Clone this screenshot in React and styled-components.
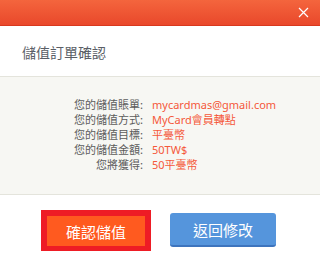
import React from "react";
import styled, { createGlobalStyle } from "styled-components";

const GlobalStyle = createGlobalStyle`
  html, body {
    margin: 0;
    padding: 0;
    background: #ffffff;
  }
  body {
    font-family: "Noto Sans", "Noto Sans CJK TC", sans-serif;
  }
`;

const Dialog = styled.div`
  width: 320px;
  height: 267px;
  display: flex;
  flex-direction: column;
  background: #ffffff;
  overflow: hidden;
`;

const Header = styled.div`
  height: 25px;
  display: flex;
  align-items: center;
  justify-content: flex-end;
  padding-right: 11px;
  background: linear-gradient(#f4653d, #e9482b);
  border-bottom: 1px solid #d8381e;
`;

const Close = styled.button`
  width: 12px;
  height: 12px;
  padding: 0;
  border: 0;
  background: none;
  display: flex;
  align-items: center;
  justify-content: center;
  cursor: pointer;
`;

const TitleBar = styled.div`
  height: 50px;
  display: flex;
  align-items: center;
  padding-left: 22px;
  padding-top: 2px;
  box-sizing: border-box;
  font-family: "Noto Sans CJK TC", sans-serif;
  font-size: 14px;
  color: #5a5e66;
`;

const Details = styled.div`
  height: 119px;
  box-sizing: border-box;
  background: #f7f7f3;
  border-top: 1px solid #e4e4dc;
  border-bottom: 1px solid #e4e4dc;
  padding-top: 20px;
  display: grid;
  grid-template-columns: 143px 1fr;
  grid-auto-rows: 15px;
  column-gap: 9px;
  align-content: start;
  font-size: 11px;
  line-height: 15px;
`;

const Label = styled.div`
  text-align: right;
  color: #5c5c5c;
  font-family: "Noto Sans CJK TC", sans-serif;
  white-space: nowrap;
`;

const Value = styled.div`
  color: #f5583a;
  font-family: "Noto Sans", "Noto Sans CJK TC", sans-serif;
  white-space: nowrap;
`;

const Footer = styled.div`
  flex: 1;
  display: flex;
  align-items: flex-start;
  padding-top: 15px;
  padding-left: 41px;
  gap: 19px;
`;

const Button = styled.button`
  font-family: "Noto Sans CJK TC", sans-serif;
  font-size: 15px;
  color: #ffffff;
  cursor: pointer;
  display: flex;
  align-items: center;
  justify-content: center;
  box-sizing: border-box;
  padding: 0;
`;

const ConfirmButton = styled(Button)`
  width: 110px;
  height: 41px;
  background: #ff5a1f;
  border: 6px solid #ee1c25;
  border-bottom-width: 5px;
`;

const BackButton = styled(Button)`
  margin-top: 3px;
  width: 106px;
  height: 34px;
  background: #5595dc;
  border: 0;
  border-bottom: 2px solid #3d74bd;
  border-radius: 3px;
`;

const rows = [
  ["您的儲值賬單:", "mycardmas@gmail.com"],
  ["您的儲值方式:", "MyCard會員轉點"],
  ["您的儲值目標:", "平臺幣"],
  ["您的儲值金額:", "50TW$"],
  ["您將獲得:", "50平臺幣"],
];

export default function App() {
  return (
    <>
      <GlobalStyle />
      <Dialog>
        <Header>
          <Close aria-label="close">
            <svg width="11" height="11" viewBox="0 0 11 11">
              <path d="M1 1 L10 10 M10 1 L1 10" stroke="#ffffff" strokeWidth="1.2" />
            </svg>
          </Close>
        </Header>
        <TitleBar>儲值訂單確認</TitleBar>
        <Details>
          {rows.map(([label, value]) => (
            <React.Fragment key={label}>
              <Label>{label}</Label>
              <Value>{value}</Value>
            </React.Fragment>
          ))}
        </Details>
        <Footer>
          <ConfirmButton>確認儲值</ConfirmButton>
          <BackButton>返回修改</BackButton>
        </Footer>
      </Dialog>
    </>
  );
}
